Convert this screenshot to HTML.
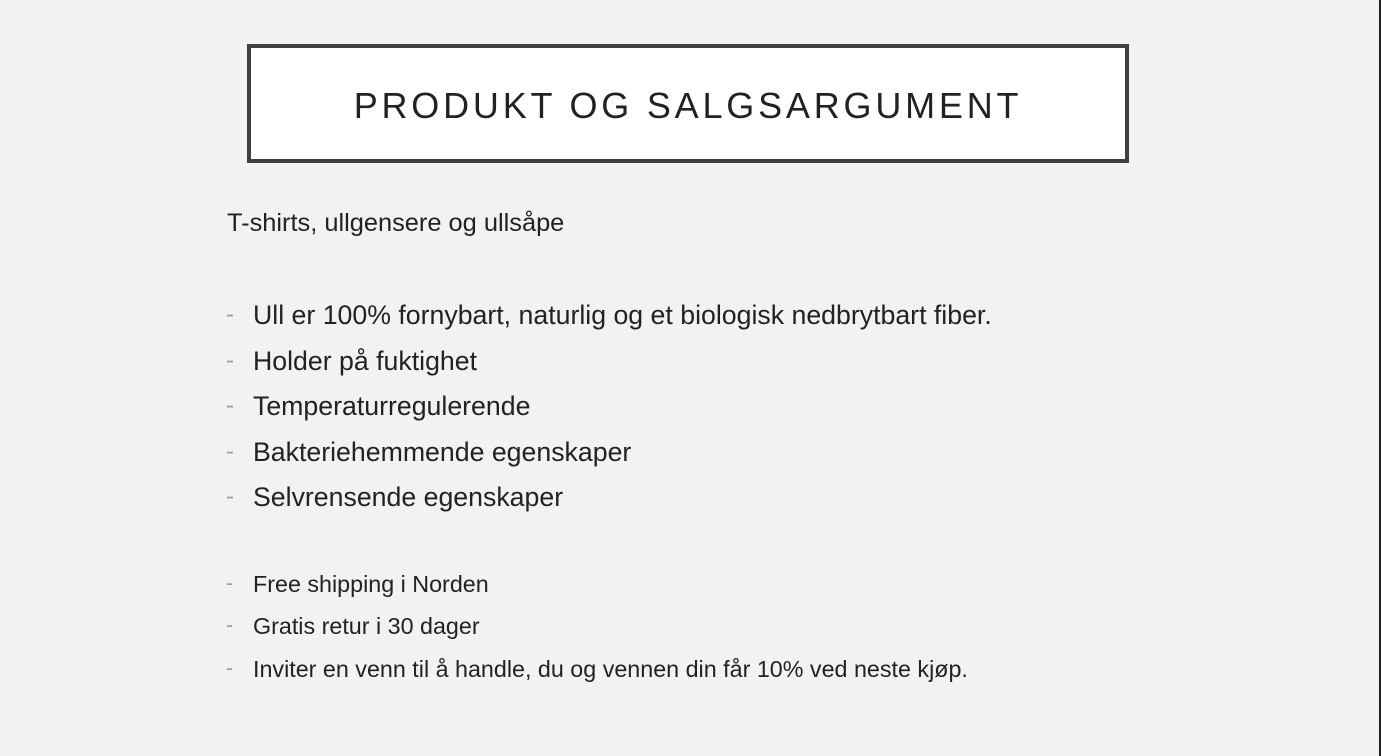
<!DOCTYPE html>
<html><head><meta charset="utf-8"><style>
html,body{margin:0;padding:0;}
body{width:1381px;height:756px;background:#f2f2f2;position:relative;overflow:hidden;font-family:"Liberation Sans",sans-serif;color:#222;}
.box{position:absolute;left:247px;top:44px;width:874px;height:111px;border:4px solid #404040;background:#fff;}
.title{position:absolute;left:0;right:0;top:38px;text-align:center;font-size:36px;letter-spacing:3.8px;color:#222;line-height:40px;}
.t{position:absolute;white-space:nowrap;line-height:30px;}
.d{position:absolute;left:226px;color:#8fa3ad;}
.edge{position:absolute;right:0;top:0;width:2px;height:756px;background:#222;}
</style></head><body>
<div class="box"><div class="title">PRODUKT OG SALGSARGUMENT</div></div>
<div class="t" style="left:227px;top:208px;font-size:25.4px;">T-shirts, ullgensere og ullsåpe</div>

<div class="t d" style="top:300px;font-size:24px;">-</div>
<div class="t" style="left:253px;top:300px;font-size:26.7px;">Ull er 100% fornybart, naturlig og et biologisk nedbrytbart fiber.</div>
<div class="t d" style="top:346px;font-size:24px;">-</div>
<div class="t" style="left:253px;top:346px;font-size:26.7px;">Holder på fuktighet</div>
<div class="t d" style="top:391px;font-size:24px;">-</div>
<div class="t" style="left:253px;top:391px;font-size:26.7px;">Temperaturregulerende</div>
<div class="t d" style="top:437px;font-size:24px;">-</div>
<div class="t" style="left:253px;top:437px;font-size:26.7px;">Bakteriehemmende egenskaper</div>
<div class="t d" style="top:482px;font-size:24px;">-</div>
<div class="t" style="left:253px;top:482px;font-size:26.7px;">Selvrensende egenskaper</div>

<div class="t d" style="top:569px;font-size:21px;">-</div>
<div class="t" style="left:253px;top:569px;font-size:23.3px;">Free shipping i Norden</div>
<div class="t d" style="top:611px;font-size:21px;">-</div>
<div class="t" style="left:253px;top:611px;font-size:23.3px;">Gratis retur i 30 dager</div>
<div class="t d" style="top:654px;font-size:21px;">-</div>
<div class="t" style="left:253px;top:654px;font-size:23.3px;">Inviter en venn til å handle, du og vennen din får 10% ved neste kjøp.</div>
<div class="edge"></div>
</body></html>
